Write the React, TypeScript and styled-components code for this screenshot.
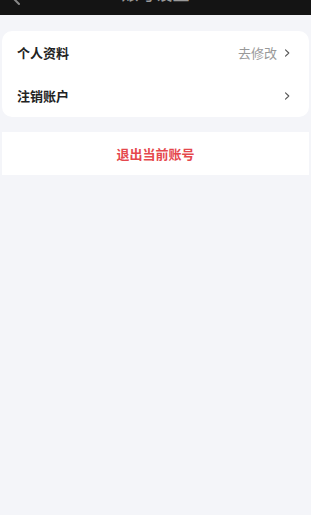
import styled, { createGlobalStyle } from 'styled-components'

const GlobalStyle = createGlobalStyle`
  html, body {
    margin: 0;
    padding: 0;
    background: #f4f5f9;
    font-family: "Noto Sans CJK SC", "Noto Sans", sans-serif;
  }
  #root { min-height: 515px; }
`

const Page = styled.div`
  min-height: 515px;
  background: #f4f5f9;
  display: flex;
  flex-direction: column;
`

const NavClip = styled.div`
  height: 15px;
  overflow: hidden;
  background: #141414;
`

const NavBar = styled.div`
  height: 44px;
  margin-top: -30px;
  display: flex;
  align-items: center;
  justify-content: center;
  position: relative;
  color: #9a9a9a;
  font-size: 17px;
  font-weight: 500;
`

const BackIcon = styled.span`
  position: absolute;
  left: 10px;
  top: 17px;
  display: flex;
`

const Content = styled.div`
  padding: 16px 2px 0;
  display: flex;
  flex-direction: column;
  gap: 15px;
`

const Card = styled.div<{ $radius?: number }>`
  background: #fff;
  border-radius: ${p => p.$radius ?? 0}px;
  overflow: hidden;
`

const Row = styled.div`
  height: 43px;
  display: flex;
  align-items: center;
  padding: 0 17px 0 15px;
`

const RowLabel = styled.span`
  flex: 1;
  font-size: 13px;
  font-weight: 700;
  color: #222;
`

const RowValue = styled.span`
  font-size: 13px;
  color: #999;
  margin-right: 5px;
`

const Chevron = styled.svg`
  width: 10px;
  height: 10px;
  color: #555;
`

const Logout = styled.div`
  height: 42px;
  display: flex;
  align-items: center;
  justify-content: center;
  font-size: 13px;
  font-weight: 700;
  color: #e5484d;
  padding-bottom: 1px;
`

function Arrow() {
  return (
    <Chevron viewBox="0 0 10 10" fill="none" stroke="currentColor" strokeWidth="1.1" strokeLinecap="round" strokeLinejoin="round">
      <path d="M3.5 1.8 L6.8 5 L3.5 8.2" />
    </Chevron>
  )
}

export default function App() {
  return (
    <Page>
      <GlobalStyle />
      <NavClip>
        <NavBar>
          <BackIcon>
            <svg width="12" height="20" viewBox="0 0 12 20" fill="none" stroke="#888" strokeWidth="2" strokeLinecap="round" strokeLinejoin="round">
              <path d="M9 3 L2 10 L9 17" />
            </svg>
          </BackIcon>
          账号设置
        </NavBar>
      </NavClip>
      <Content>
        <Card $radius={10}>
          <Row>
            <RowLabel>个人资料</RowLabel>
            <RowValue>去修改</RowValue>
            <Arrow />
          </Row>
          <Row>
            <RowLabel>注销账户</RowLabel>
            <Arrow />
          </Row>
        </Card>
        <Card>
          <Logout>退出当前账号</Logout>
        </Card>
      </Content>
    </Page>
  )
}
